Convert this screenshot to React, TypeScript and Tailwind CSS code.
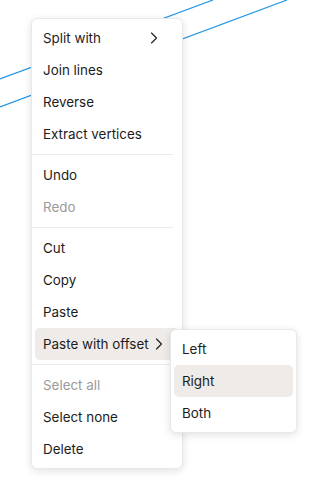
import { ChevronRight } from "lucide-react";

type Item = { label: string; sub?: boolean; disabled?: boolean; active?: boolean } | "sep";

const items: Item[] = [
  { label: "Split with", sub: true },
  { label: "Join lines" },
  { label: "Reverse" },
  { label: "Extract vertices" },
  "sep",
  { label: "Undo" },
  { label: "Redo", disabled: true },
  "sep",
  { label: "Cut" },
  { label: "Copy" },
  { label: "Paste" },
  { label: "Paste with offset", sub: true, active: true },
  "sep",
  { label: "Select all", disabled: true },
  { label: "Select none" },
  { label: "Delete" },
];

const MenuRow = ({ label, sub, disabled, active }: { label: string; sub?: boolean; disabled?: boolean; active?: boolean }) => (
  <div
    className={`flex h-8 items-center whitespace-nowrap rounded-[5px] pl-2 ${active ? "bg-[#efebe8]" : ""} ${
      disabled ? "text-[#9a9a9a]" : "text-[#1c1c1c]"
    }`}
  >
    <span>{label}</span>
    {sub && (
      <span className="ml-auto mr-[15px] flex items-center">
        <ChevronRight size={20} strokeWidth={1.3} className="text-[#1c1c1c]" />
      </span>
    )}
  </div>
);

export default function App() {
  return (
    <div
      className="relative h-[492px] w-[322px] overflow-hidden bg-white text-[13.4px]"
      style={{ fontFamily: "Inter, 'Noto Sans', sans-serif" }}
    >
      <svg className="absolute inset-0" width="322" height="492">
        <line x1="0" y1="79" x2="213" y2="0" stroke="#1e96e6" strokeWidth="1.2" />
        <line x1="0" y1="107" x2="287" y2="0" stroke="#1e96e6" strokeWidth="1.2" />
      </svg>

      <div className="absolute left-[31px] top-[18px] w-[152px] rounded-[6px] border border-[#e8e8e8] bg-white p-[3px] shadow-[0_2px_8px_rgba(0,0,0,0.12)]">
        {items.map((it, i) =>
          it === "sep" ? (
            <div key={i} className="my-1 -ml-[3px] mr-[6px] h-px bg-[#ebebeb]" />
          ) : (
            <MenuRow key={i} {...it} />
          )
        )}

        <div className="absolute left-[138px] top-[310px] w-[127px] rounded-[6px] border border-[#e8e8e8] bg-white p-[3px] shadow-[0_2px_8px_rgba(0,0,0,0.12)]">
          <MenuRow label="Left" />
          <MenuRow label="Right" active />
          <MenuRow label="Both" />
        </div>
      </div>
    </div>
  );
}
